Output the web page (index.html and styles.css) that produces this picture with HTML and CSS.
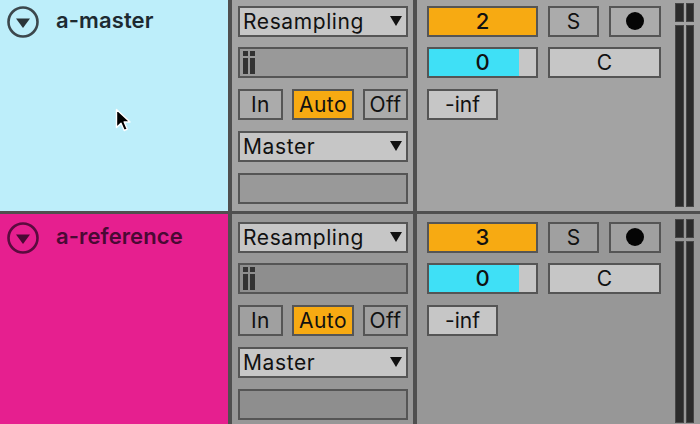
FILE: index.html
```html
<!DOCTYPE html>
<html lang="en">
<head>
    <meta charset="UTF-8">
    <meta name="viewport" content="width=device-width, initial-scale=1.0">
    <title>Tracks</title>
    <link rel="stylesheet" href="styles.css">
</head>
<body>
    <div class="set">
        <!-- track 1 -->
        <div class="track track-master">
            <div class="head">
                <svg class="fold" width="34" height="34" viewBox="0 0 34 34">
                    <circle cx="17" cy="17" r="14.5" fill="none" stroke-width="2.6"/>
                    <path d="M10 13.5 L24 13.5 L17 23 Z"/>
                </svg>
                <span class="name">a-master</span>
            </div>
            <div class="io">
                <div class="box select">Resampling<span class="arrow"></span></div>
                <div class="box dark"><span class="chan"><i></i><i></i></span></div>
                <div class="monitor">
                    <div class="box btn">In</div>
                    <div class="box btn on">Auto</div>
                    <div class="box btn">Off</div>
                </div>
                <div class="box select">Master<span class="arrow"></span></div>
                <div class="box dark"></div>
            </div>
            <div class="mix">
                <div class="ctrls">
                    <div class="box num on">2</div>
                    <div class="box btn">S</div>
                    <div class="box btn"><span class="rec"></span></div>
                    <div class="box pan"><span class="fill"></span><span class="val">0</span></div>
                    <div class="box light wide">C</div>
                    <div class="box light inf">-inf</div>
                </div>
                <div class="meter">
                    <div class="lane"><span class="peak"></span><span class="level"></span></div>
                    <div class="lane"><span class="peak"></span><span class="level"></span></div>
                </div>
            </div>
        </div>

        <!-- track 2 -->
        <div class="track track-ref">
            <div class="head">
                <svg class="fold" width="34" height="34" viewBox="0 0 34 34">
                    <circle cx="17" cy="17" r="14.5" fill="none" stroke-width="2.6"/>
                    <path d="M10 13.5 L24 13.5 L17 23 Z"/>
                </svg>
                <span class="name">a-reference</span>
            </div>
            <div class="io">
                <div class="box select">Resampling<span class="arrow"></span></div>
                <div class="box dark"><span class="chan"><i></i><i></i></span></div>
                <div class="monitor">
                    <div class="box btn">In</div>
                    <div class="box btn on">Auto</div>
                    <div class="box btn">Off</div>
                </div>
                <div class="box select">Master<span class="arrow"></span></div>
                <div class="box dark"></div>
            </div>
            <div class="mix">
                <div class="ctrls">
                    <div class="box num on">3</div>
                    <div class="box btn">S</div>
                    <div class="box btn"><span class="rec"></span></div>
                    <div class="box pan"><span class="fill"></span><span class="val">0</span></div>
                    <div class="box light wide">C</div>
                    <div class="box light inf">-inf</div>
                </div>
                <div class="meter">
                    <div class="lane"><span class="peak"></span><span class="level"></span></div>
                    <div class="lane"><span class="peak"></span><span class="level"></span></div>
                </div>
            </div>
        </div>
    </div>

    <svg class="cursor" width="18" height="26" viewBox="0 0 18 26">
        <path d="M1.5 1.5 L1.5 19.5 L6 15.2 L9.2 22.5 L12.3 21.2 L9.2 14 L15 14 Z" fill="#000" stroke="#fff" stroke-width="1.4" stroke-linejoin="round"/>
    </svg>
</body>
</html>
```

FILE: styles.css
```css
* {
    margin: 0;
    padding: 0;
    box-sizing: border-box;
}

body {
    width: 700px;
    height: 424px;
    overflow: hidden;
    position: relative;
    background: #4f4f4f;
    font-family: Inter, "Noto Sans", sans-serif;
    color: #111;
}

.set {
    margin-top: -2px;
    display: flex;
    flex-direction: column;
    gap: 3px;
}

.track {
    display: grid;
    grid-template-columns: 228px 181px 1fr;
    column-gap: 4px;
    height: 213px;
}

/* track header */

.head {
    display: flex;
    align-items: flex-start;
    gap: 16px;
    padding: 7px 0 0 6px;
}

.track-master .head {
    background: #bdeefa;
    color: #1d2a31;
}

.track-ref .head {
    background: #e61f8f;
    color: #4a0934;
}

.fold {
    flex: none;
}

.track-master .fold circle { stroke: #3c474c; }
.track-master .fold path { fill: #2a3438; }
.track-ref .fold circle { stroke: #5a0b3e; }
.track-ref .fold path { fill: #4a0934; }

.name {
    font-size: 22px;
    font-weight: 600;
    line-height: 24px;
    letter-spacing: 0.1px;
    padding-top: 3px;
}

/* in / out column */

.io {
    display: flex;
    flex-direction: column;
    gap: 10.75px;
    padding: 7.5px 5px 0 6px;
}

.track-master .io,
.track-master .mix {
    background: #a3a3a3;
}

.track-ref .io,
.track-ref .mix {
    background: #979797;
}

.box {
    height: 31px;
    border: 2px solid #555;
    font-size: 21px;
    line-height: 27px;
    display: flex;
    align-items: center;
    justify-content: center;
}

.select {
    background: #c6c6c6;
    justify-content: space-between;
    padding: 0 4px 0 3px;
    letter-spacing: 0.6px;
}

.arrow {
    width: 0;
    height: 0;
    border-left: 6.5px solid transparent;
    border-right: 6.5px solid transparent;
    border-top: 10px solid #111;
}

.dark {
    background: #999;
    justify-content: flex-start;
    padding-left: 3px;
}

.track-ref .dark {
    background: #8e8e8e;
}

.chan {
    display: flex;
    gap: 2px;
}

.chan i {
    width: 5px;
    height: 23px;
    background: linear-gradient(#333 0 5px, transparent 5px 7px, #333 7px);
}

.monitor {
    display: grid;
    grid-template-columns: 45px 62px 45px;
    justify-content: space-between;
}

.monitor .btn {
    letter-spacing: 0.4px;
}

.btn {
    background: #ababab;
}

.track-ref .btn {
    background: #a0a0a0;
}

.box.on {
    background: #f7aa12;
}

/* mixer column */

.mix {
    display: flex;
    padding: 7.5px 0 0 10px;
}

.ctrls {
    display: grid;
    grid-template-columns: 111px 51px 52px;
    grid-auto-rows: 31px;
    column-gap: 10px;
    row-gap: 10.5px;
    align-content: start;
}

.num {
    font-size: 22px;
    font-weight: 500;
}

.rec {
    width: 18px;
    height: 18px;
    border-radius: 50%;
    background: #050505;
}

.pan {
    position: relative;
    background: #c6c6c6;
}

.pan .fill {
    position: absolute;
    left: 0;
    top: 0;
    bottom: 0;
    width: 84%;
    background: #3fe0f6;
}

.pan .val {
    position: relative;
    font-size: 22px;
    font-weight: 500;
}

.light {
    background: #c6c6c6;
}

.wide {
    grid-column: span 2;
}

.inf {
    width: 71px;
}

.meter {
    display: flex;
    gap: 2px;
    margin-left: 14px;
}

.lane {
    width: 8.5px;
    display: flex;
    flex-direction: column;
    gap: 3px;
    margin-top: -3px;
}

.lane span {
    background: #2b2b2b;
    border: 1px solid #474747;
}

.peak {
    height: 19px;
}

.level {
    height: 182px;
}

.cursor {
    position: absolute;
    left: 115px;
    top: 108px;
}
```
